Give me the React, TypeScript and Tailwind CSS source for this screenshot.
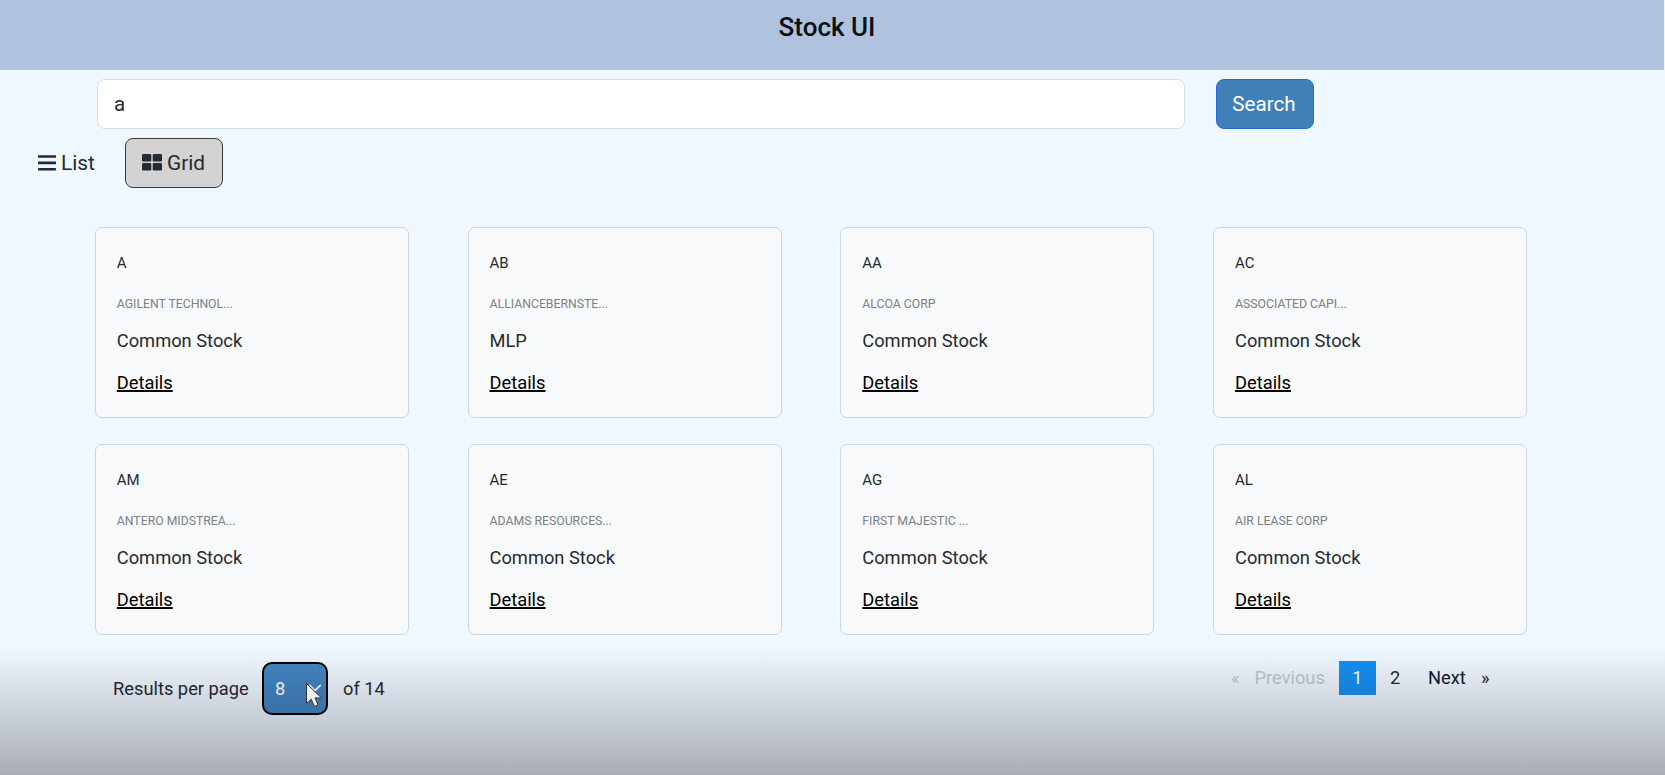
import React from "react";

type Stock = { symbol: string; name: string; kind: string };

const stocks: Stock[] = [
  { symbol: "A", name: "AGILENT TECHNOL...", kind: "Common Stock" },
  { symbol: "AB", name: "ALLIANCEBERNSTE...", kind: "MLP" },
  { symbol: "AA", name: "ALCOA CORP", kind: "Common Stock" },
  { symbol: "AC", name: "ASSOCIATED CAPI...", kind: "Common Stock" },
  { symbol: "AM", name: "ANTERO MIDSTREA...", kind: "Common Stock" },
  { symbol: "AE", name: "ADAMS RESOURCES...", kind: "Common Stock" },
  { symbol: "AG", name: "FIRST MAJESTIC ...", kind: "Common Stock" },
  { symbol: "AL", name: "AIR LEASE CORP", kind: "Common Stock" },
];

function ListIcon() {
  return (
    <svg className="shrink-0" width="18" height="16" viewBox="0 0 18 16" fill="currentColor" aria-hidden="true">
      <rect x="0" y="0.2" width="18" height="2.6" rx="0.4" />
      <rect x="0" y="6.600" width="18" height="2.600" rx="0.4" />
      <rect x="0" y="13" width="18" height="2.600" rx="0.4" />
    </svg>
  );
}

function GridIcon() {
  return (
    <svg className="mb-[2px] shrink-0" width="20" height="17" viewBox="0 0 20 17" fill="currentColor" aria-hidden="true">
      <rect x="0" y="0" width="9.300" height="7.600" rx="1.4" />
      <rect x="10.700" y="0" width="9.300" height="7.600" rx="1.4" />
      <rect x="0" y="9" width="9.300" height="7.600" rx="1.4" />
      <rect x="10.700" y="9" width="9.300" height="7.600" rx="1.4" />
    </svg>
  );
}

function StockCard({ stock }: { stock: Stock }) {
  return (
    <article className="flex h-[191px] w-[314px] flex-col items-start rounded-[7px] border border-[#ced5de] bg-[#f8f9fb] pl-[21px] pt-[25px]">
      <h2 className="text-[15px] leading-[20px]">{stock.symbol}</h2>
      <p className="mt-[22px] text-[12.25px] leading-[18px] text-[#7a8087]">{stock.name}</p>
      <p className="mt-[15px] text-[18.3px] leading-[26px]">{stock.kind}</p>
      <a href="#" className="mt-4 text-[18.3px] leading-[26px] text-black underline decoration-2">
        Details
      </a>
    </article>
  );
}

export default function App() {
  return (
    <div className="relative h-[775px] w-[1665px] overflow-hidden bg-[#eff7ff] font-['Roboto',sans-serif] text-[#252a30]">
      <header className="flex h-[70px] w-[1664px] justify-center bg-[#afc3df] pr-[10px] pt-[11px]">
        <h1 className="text-[26px] font-medium leading-[32px] text-[#0b0f14]">Stock UI</h1>
      </header>

      <form className="mt-[9px] flex h-[50px] items-stretch pl-[97px]">
        <input
          defaultValue="a"
          className="w-[1088px] rounded-lg border border-[#d6dee7] bg-white px-4 pt-px text-[20.6px] outline-none"
        />
        <button
          type="button"
          className="ml-[31px] w-[98px] rounded-lg border border-[#1f6fd6] bg-[#417fb9] pr-[2px] pt-[1px] text-[20.6px] text-white"
        >
          Search
        </button>
      </form>

      <div className="mt-[9px] flex h-[50px] items-center pl-[38px] text-[20.8px]">
        <button type="button" className="flex w-[58px] items-center">
          <ListIcon />
          <span className="ml-[5px] pt-px">List</span>
        </button>
        <button
          type="button"
          className="ml-[29px] flex h-[50px] w-[98px] items-center rounded-lg border border-[#343a40] bg-[#d3d3d3] pl-4"
        >
          <GridIcon />
          <span className="ml-[5px] pt-px">Grid</span>
        </button>
      </div>

      <main className="mt-[39px] grid w-max grid-cols-[repeat(4,314px)] gap-x-[58.75px] gap-y-[26px] pl-[94.8px]">
        {stocks.map((stock) => (
          <StockCard key={stock.symbol} stock={stock} />
        ))}
      </main>

      <footer className="flex items-start pl-[113px] pt-[26px] text-[18.3px]">
        <div className="flex h-[54px] w-[273px] items-center">
          <span className="w-[149px] pt-[1px]">Results per page</span>
          <div className="flex h-[53px] w-[66px] items-center rounded-[10px] border-2 border-black bg-[#4385c2] pl-[11px] text-white">
            <span className="w-[33px] pt-[1px]">8</span>
            <svg width="14" height="14" viewBox="0 0 16 16" fill="none" stroke="white" strokeWidth="2" strokeLinecap="round" strokeLinejoin="round">
              <path d="m2 5 6 6 6-6" />
            </svg>
          </div>
          <span className="ml-[15px] pt-[1px]">of 14</span>
        </div>
        <nav className="ml-[845px] flex h-[34px] items-center">
          <span className="w-[23.5px] text-[#c2c6cb]">«</span>
          <span className="w-[84.5px] text-[#c2c6cb]">Previous</span>
          <span className="flex h-[34px] w-[37px] items-center justify-center bg-[#1590f2] text-white">1</span>
          <span className="ml-[14px] w-[38px]">2</span>
          <span className="w-[53px] text-[#111827]">Next</span>
          <span>»</span>
        </nav>
      </footer>

      <div className="pointer-events-none absolute inset-x-0 bottom-0 h-[127px] bg-linear-to-b from-transparent to-[#05000a]/30" />
      <svg className="absolute left-[305px] top-[682px]" width="18" height="26" viewBox="0 0 18 26" aria-hidden="true">
        <path d="M1.5 1.5v20l4.7-4.3 3.2 7.3 3.7-1.6-3.1-7H16.5Z" fill="#eeeeee" stroke="#333" strokeWidth="1" />
      </svg>
    </div>
  );
}
